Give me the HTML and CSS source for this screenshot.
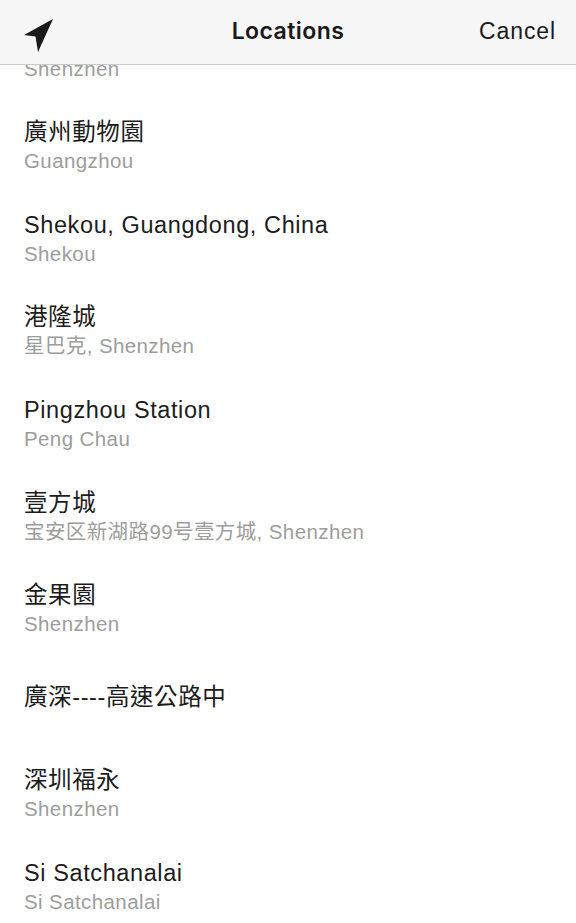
FILE: index.html
```html
<!DOCTYPE html>
<html lang="en">

<head>
    <meta charset="UTF-8">
    <meta name="viewport" content="width=device-width, initial-scale=1.0">
    <title>Locations</title>
    <link rel="stylesheet" href="styles.css">
</head>

<body>

    <header class="topbar">
        <button class="locate-btn" aria-label="Current location">
            <svg width="40" height="50" viewBox="0 0 40 50">
                <polygon points="37,13 8,29 19.5,30.5 22,46" fill="#1a1a1a" />
            </svg>
        </button>
        <h1 class="topbar-title">Locations</h1>
        <a class="cancel-btn" href="#">Cancel</a>
    </header>

    <ul class="place-list">
        <li class="place">
            <p class="place-name">深圳</p>
            <p class="place-sub">Shenzhen</p>
        </li>
        <li class="place">
            <p class="place-name">廣州動物園</p>
            <p class="place-sub">Guangzhou</p>
        </li>
        <li class="place">
            <p class="place-name">Shekou, Guangdong, China</p>
            <p class="place-sub">Shekou</p>
        </li>
        <li class="place">
            <p class="place-name">港隆城</p>
            <p class="place-sub">星巴克, Shenzhen</p>
        </li>
        <li class="place">
            <p class="place-name">Pingzhou Station</p>
            <p class="place-sub">Peng Chau</p>
        </li>
        <li class="place">
            <p class="place-name">壹方城</p>
            <p class="place-sub">宝安区新湖路99号壹方城, Shenzhen</p>
        </li>
        <li class="place">
            <p class="place-name">金果園</p>
            <p class="place-sub">Shenzhen</p>
        </li>
        <li class="place place-single">
            <p class="place-name">廣深----高速公路中</p>
        </li>
        <li class="place">
            <p class="place-name">深圳福永</p>
            <p class="place-sub">Shenzhen</p>
        </li>
        <li class="place">
            <p class="place-name">Si Satchanalai</p>
            <p class="place-sub">Si Satchanalai</p>
        </li>
    </ul>

</body>

</html>
```

FILE: styles.css
```css
* {
    padding: 0;
    margin: 0;
    box-sizing: border-box;
}

body {
    width: 576px;
    height: 923px;
    overflow: hidden;
    background-color: #ffffff;
    font-family: "Liberation Sans", "Noto Sans CJK TC", "Noto Sans CJK SC", sans-serif;
    color: #1c1c1c;
}

/* top bar sits over the list, like the ios nav bar */
.topbar {
    position: absolute;
    top: 0;
    left: 0;
    z-index: 2;
    width: 576px;
    height: 65px;
    background-color: #f7f7f7;
    border-bottom: 1px solid #c9c9c9;
    display: grid;
    grid-template-columns: 1fr auto 1fr;
    align-items: center;
    padding: 0 20px 2px 16px;
}

.locate-btn {
    border: none;
    background: none;
    width: 40px;
    height: 50px;
    display: flex;
}

.topbar-title {
    font-family: "Inter", "Liberation Sans", sans-serif;
    font-size: 23px;
    font-weight: 600;
    letter-spacing: 0.45px;
    color: #1a1a1a;
    padding-left: 4px;
}

.cancel-btn {
    justify-self: end;
    font-size: 23px;
    letter-spacing: 0.9px;
    color: #1a1a1a;
    text-decoration: none;
}

.place-list {
    list-style: none;
    padding-top: 7.6px;
}

.place {
    height: 92.6px;
    padding: 17px 24px 0 24px;
}

.place-single {
    padding-top: 26px;
}

.place-name {
    font-size: 23.5px;
    line-height: 30px;
    letter-spacing: 0.6px;
    color: #1c1c1c;
    white-space: nowrap;
}

.place-sub {
    margin-top: 1px;
    font-size: 20.5px;
    line-height: 26px;
    letter-spacing: 0.4px;
    color: #9d9d9d;
    white-space: nowrap;
}
```
